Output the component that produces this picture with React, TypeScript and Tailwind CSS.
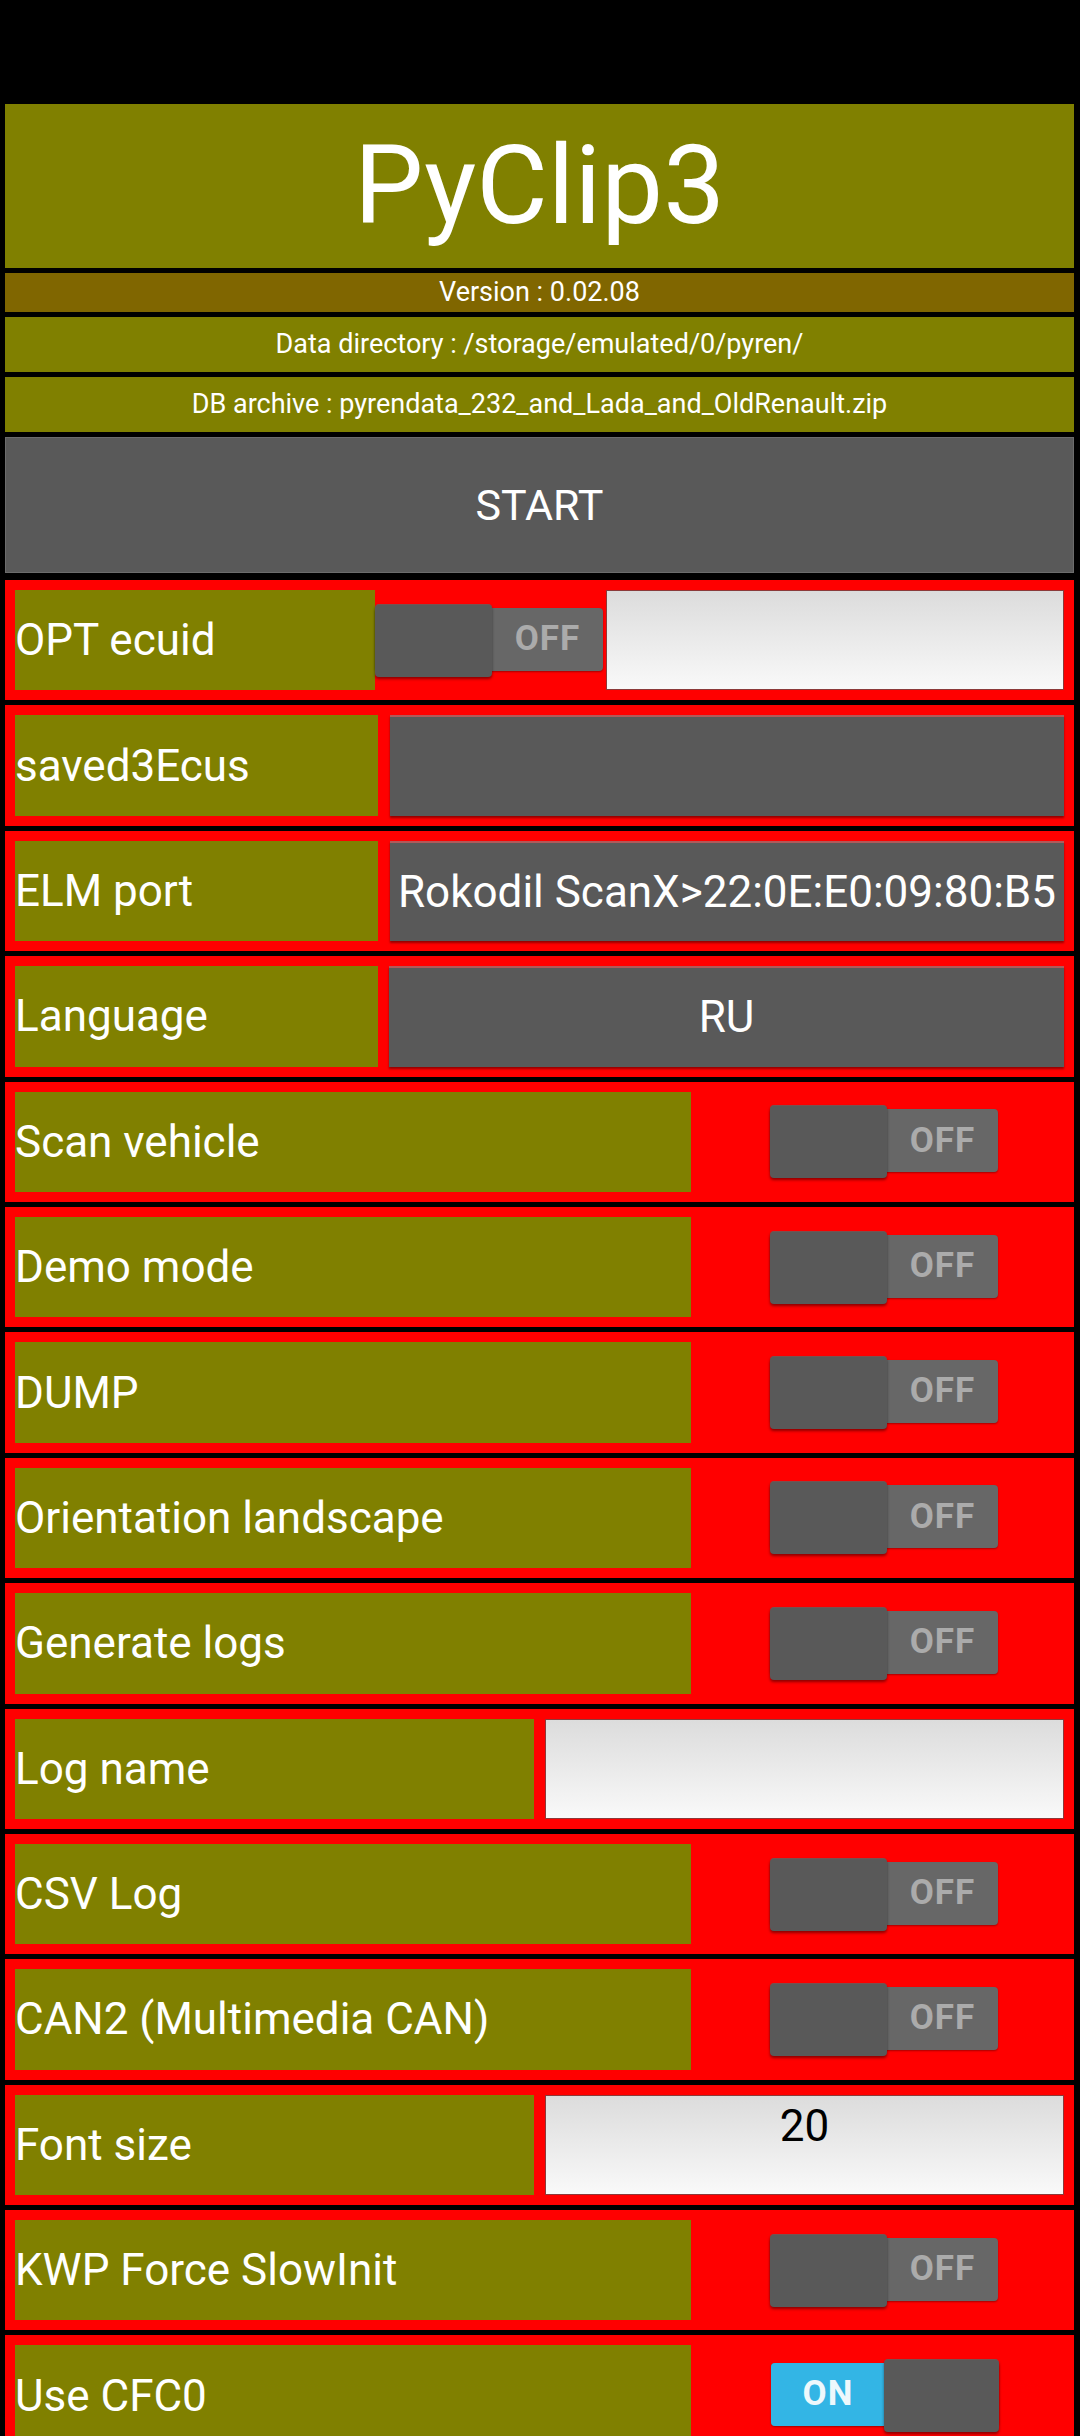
import React from 'react';

const labelCls = 'bg-[#808000] text-white text-[44px] leading-none flex items-center whitespace-nowrap overflow-hidden';

const Switch = ({ on = false }: { on?: boolean }) => {
  return (
    <div className="relative w-[228px] h-[73px] shrink-0">
      {/* Track */}
      <div className="absolute left-0 right-0 top-[4px] h-[63px] rounded-[4px] bg-[#676767] shadow-[0_1px_2px_rgba(0,0,0,0.35)]">
        {on ? (
          <div className="w-[114px] h-full rounded-l-[4px] bg-[#33b5e5] flex items-center justify-center text-[35px] font-bold text-[#eef8fc] font-['Roboto',sans-serif] tracking-[1px]">
            ON
          </div>
        ) : (
          <div className="ml-[117px] h-full flex items-center justify-center text-[35px] font-bold text-[#ababab] font-['Roboto',sans-serif] tracking-[1px]">
            OFF
          </div>
        )}
      </div>
      {/* Thumb */}
      <div
        className={
          on
            ? 'absolute top-0 left-[113px] w-[115px] h-[73px] rounded-[4px] bg-[#595959] border-t border-[#7a5050] shadow-[0_2px_3px_rgba(0,0,0,0.45)]'
            : 'absolute top-0 left-0 w-[117px] h-[73px] rounded-[4px] bg-[#595959] border-t border-[#7a5050] shadow-[0_2px_3px_rgba(0,0,0,0.45)]'
        }
      />
    </div>
  );
};

const TextInput = ({ value = '' }: { value?: string }) => (
  <div className="flex-1 border border-[#8c3a3a] bg-gradient-to-b from-[#dcdcdc] to-[#f9f9f9] text-black text-[44px] leading-[51px] pt-[5px] text-center">
    {value}
  </div>
);

const Spinner = ({ value = '' }: { value?: string }) => (
  <div className="flex-1 bg-[#595959] border-t-2 border-[#b05a5a] shadow-[0_2px_2px_rgba(80,0,0,0.6)] flex items-center justify-center text-white text-[44px] leading-none whitespace-nowrap overflow-visible">
    {value}
  </div>
);

const Row = ({ children }: { children: React.ReactNode }) => (
  <div className="h-[120.4px] bg-[#ff0000] p-[10px] flex items-stretch shrink-0">{children}</div>
);

const switchRows: { label: string; on?: boolean }[] = [
  { label: 'Scan vehicle' },
  { label: 'Demo mode' },
  { label: 'DUMP' },
  { label: 'Orientation landscape' },
  { label: 'Generate logs' },
];

const App = () => {
  return (
    <div className="w-[1080px] h-[2436px] overflow-hidden bg-black pt-[104px] pl-[5px] pr-[6px] font-['Roboto',sans-serif]">
      <div className="flex flex-col gap-[5px]">
        {/* Header */}
        <div className="h-[164px] bg-[#808000] flex items-center justify-center text-white text-[110px] leading-none">
          PyClip3
        </div>
        <div className="h-[39px] bg-[#806600] flex items-center justify-center text-white text-[27px] leading-none">
          Version : 0.02.08
        </div>
        <div className="h-[55px] bg-[#808000] flex items-center justify-center text-white text-[27px] leading-none">
          Data directory : /storage/emulated/0/pyren/
        </div>
        <div className="h-[55px] bg-[#808000] flex items-center justify-center text-white text-[27px] leading-none">
          DB archive : pyrendata_232_and_Lada_and_OldRenault.zip
        </div>
        <div className="h-[136px] bg-[#595959] border border-[#6c6c6c] flex items-center justify-center text-white text-[43px] leading-none">
          START
        </div>

        {/* Settings */}
        <div className="mt-[2px] flex flex-col gap-[5px]">
          <Row>
            <div className={`${labelCls} w-[360px]`}>OPT ecuid</div>
            <div className="flex items-center">
              <Switch />
            </div>
            <div className="ml-[3px] flex-1 flex">
              <TextInput />
            </div>
          </Row>
          <Row>
            <div className={`${labelCls} w-[363px]`}>saved3Ecus</div>
            <div className="ml-[12px] flex-1 flex">
              <Spinner />
            </div>
          </Row>
          <Row>
            <div className={`${labelCls} w-[363px]`}>ELM port</div>
            <div className="ml-[12px] flex-1 flex">
              <Spinner value="Rokodil ScanX>22:0E:E0:09:80:B5" />
            </div>
          </Row>
          <Row>
            <div className={`${labelCls} w-[363px]`}>Language</div>
            <div className="ml-[11px] flex-1 flex">
              <Spinner value="RU" />
            </div>
          </Row>

          {switchRows.map((r) => (
            <Row key={r.label}>
              <div className={`${labelCls} w-[676px]`}>{r.label}</div>
              <div className="ml-[79px] flex items-center">
                <Switch on={r.on} />
              </div>
            </Row>
          ))}

          <Row>
            <div className={`${labelCls} w-[519px]`}>Log name</div>
            <div className="ml-[11px] flex-1 flex">
              <TextInput />
            </div>
          </Row>
          <Row>
            <div className={`${labelCls} w-[676px]`}>CSV Log</div>
            <div className="ml-[79px] flex items-center">
              <Switch />
            </div>
          </Row>
          <Row>
            <div className={`${labelCls} w-[676px]`}>CAN2 (Multimedia CAN)</div>
            <div className="ml-[79px] flex items-center">
              <Switch />
            </div>
          </Row>
          <Row>
            <div className={`${labelCls} w-[519px]`}>Font size</div>
            <div className="ml-[11px] flex-1 flex">
              <TextInput value="20" />
            </div>
          </Row>
          <Row>
            <div className={`${labelCls} w-[676px]`}>KWP Force SlowInit</div>
            <div className="ml-[79px] flex items-center">
              <Switch />
            </div>
          </Row>
          <Row>
            <div className={`${labelCls} w-[676px]`}>Use CFC0</div>
            <div className="ml-[80px] flex items-center">
              <Switch on />
            </div>
          </Row>
        </div>
      </div>
    </div>
  );
};

export default App;
